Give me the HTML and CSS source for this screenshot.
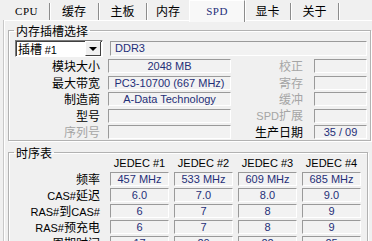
FILE: index.html
```html
<!DOCTYPE html>
<html lang="zh-CN">
<head>
    <meta charset="UTF-8">
    <title>CPU-Z SPD</title>
    <link rel="stylesheet" href="styles.css">
</head>
<body>
    <div class="tabs">
        <div class="tab mono">CPU</div>
        <div class="tab">缓存</div>
        <div class="tab">主板</div>
        <div class="tab">内存</div>
        <div class="tab mono active">SPD</div>
        <div class="tab">显卡</div>
        <div class="tab">关于</div>
    </div>

    <div class="panel">
        <fieldset class="group slot">
            <legend>内存插槽选择</legend>
            <div class="slot-top">
                <div class="combo">
                    <span>插槽 <span class="l">#1</span></span>
                    <span class="arrow"></span>
                </div>
                <div class="field left">DDR3</div>
            </div>
            <div class="info">
                <label>模块大小</label><div class="field">2048 MB</div>
                <label class="off">校正</label><div class="field"></div>

                <label>最大带宽</label><div class="field">PC3-10700 (667 MHz)</div>
                <label class="off">寄存</label><div class="field"></div>

                <label>制造商</label><div class="field">A-Data Technology</div>
                <label class="off">缓冲</label><div class="field"></div>

                <label>型号</label><div class="field"></div>
                <label class="off"><span class="l">SPD</span>扩展</label><div class="field"></div>

                <label class="off">序列号</label><div class="field"></div>
                <label>生产日期</label><div class="field">35 / 09</div>
            </div>
        </fieldset>

        <fieldset class="group timing">
            <legend>时序表</legend>
            <div class="timings">
                <span></span>
                <span class="head">JEDEC #1</span>
                <span class="head">JEDEC #2</span>
                <span class="head">JEDEC #3</span>
                <span class="head">JEDEC #4</span>

                <label>频率</label>
                <div class="field">457 MHz</div>
                <div class="field">533 MHz</div>
                <div class="field">609 MHz</div>
                <div class="field">685 MHz</div>

                <label><span class="l">CAS#</span>延迟</label>
                <div class="field">6.0</div>
                <div class="field">7.0</div>
                <div class="field">8.0</div>
                <div class="field">9.0</div>

                <label><span class="l">RAS#</span>到<span class="l">CAS#</span></label>
                <div class="field">6</div>
                <div class="field">7</div>
                <div class="field">8</div>
                <div class="field">9</div>

                <label><span class="l">RAS#</span>预充电</label>
                <div class="field">6</div>
                <div class="field">7</div>
                <div class="field">8</div>
                <div class="field">9</div>

                <label>周期时间</label>
                <div class="field">17</div>
                <div class="field">20</div>
                <div class="field">22</div>
                <div class="field">25</div>
            </div>
        </fieldset>
    </div>
</body>
</html>
```

FILE: styles.css
```css
body {
    margin: 0;
    height: 241px;
    overflow: hidden;
    background-color: #f0f0f0;
    font-family: "Noto Sans CJK SC", sans-serif;
    font-size: 12px;
    color: #000;
}

.l {
    font-family: "Liberation Sans", sans-serif;
    font-size: 11px;
}

/* tabs */
.tabs {
    display: flex;
    height: 20px;
    padding-left: 4px;
}

.tab {
    height: 17px;
    margin-top: 3px;
    line-height: 16px;
    text-align: center;
    border-right: 1px solid #8c8c8c;
    box-shadow: 1px 0 0 #fff;
}

.tab:nth-child(1) { width: 45px; }
.tab:nth-child(2) { width: 48px; }
.tab:nth-child(3) { width: 47px; }
.tab:nth-child(4) { width: 42px; border-right: none; box-shadow: none; }
.tab:nth-child(6) { width: 45px; }
.tab:nth-child(7) { width: 47px; }

.tab.mono {
    font-family: "Liberation Serif", serif;
    font-size: 11px;
    letter-spacing: 0.5px;
}

.tab.active {
    width: 54px;
    height: 21px;
    margin-top: 0;
    line-height: 21px;
    color: #1f2f78;
    background-color: #f8f8f8;
    border-top: 1px solid #fff;
    border-left: 1px solid #fff;
    border-right: 1px solid #8c8c8c;
    position: relative;
    z-index: 1;
}

/* panel */
.panel {
    margin-left: 4px;
    border-top: 1px solid #fff;
    border-left: 1px solid #fff;
    box-shadow: -1px 0 0 #c8c8c8;
    padding: 0 4px 0 3px;
}

.group {
    margin: 2px 0 0;
    padding: 1px 3px 1px 6px;
    border: 1px solid #b2b2b2;
    box-shadow: 1px 1px 0 #fff, inset 1px 1px 0 #fff;
}

.group legend {
    padding: 0 2px;
    margin-left: -1px;
    line-height: 15px;
}

.field {
    height: 12px;
    line-height: 12px;
    border-top: 1px solid #9a9a9a;
    border-left: 1px solid #9a9a9a;
    border-bottom: 1px solid #fff;
    border-right: 1px solid #fff;
    background-color: #f2f2f2;
    font-family: "Liberation Sans", sans-serif;
    font-size: 11px;
    color: #1f2f78;
    text-align: center;
    white-space: nowrap;
    overflow: hidden;
}

.field.left {
    text-align: left;
    padding-left: 4px;
}

label {
    text-align: right;
    line-height: 14px;
    white-space: nowrap;
}

label.off {
    color: #a5a5a5;
}

/* slot selector */
.slot-top {
    display: flex;
    align-items: center;
    gap: 7px;
    margin-top: 1px;
}

.combo {
    width: 84px;
    height: 15px;
    display: flex;
    justify-content: space-between;
    align-items: center;
    padding-left: 2px;
    background-color: #fff;
    border-top: 1px solid #7a7a7a;
    border-left: 1px solid #7a7a7a;
    border-bottom: 1px solid #fff;
    border-right: 1px solid #fff;
    box-shadow: inset 1px 1px 0 #404040;
}

.arrow {
    width: 14px;
    height: 13px;
    margin-right: 1px;
    background-color: #f0f0f0;
    border-top: 1px solid #fff;
    border-left: 1px solid #fff;
    border-right: 1px solid #404040;
    border-bottom: 1px solid #404040;
    display: flex;
    justify-content: center;
    align-items: center;
}

.arrow::after {
    content: "";
    border-left: 4px solid transparent;
    border-right: 4px solid transparent;
    border-top: 4px solid #000;
    margin-top: 1px;
}

.slot-top .field {
    flex: 1;
    height: 13px;
    line-height: 13px;
}

.info {
    display: grid;
    grid-template-columns: 85px 123px 67px 53px;
    grid-auto-rows: 14px;
    column-gap: 8px;
    row-gap: 2.5px;
    margin-top: 2px;
    align-items: center;
}

.info label:nth-child(4n+3) {
    padding-right: 3px;
}

/* timings */
.timing {
    margin-top: 4px;
}

.timings {
    display: grid;
    grid-template-columns: 90px repeat(4, 59px);
    grid-auto-rows: 14px;
    column-gap: 5px;
    row-gap: 2px;
    margin-top: -5px;
    align-items: center;
}

.timings label {
    padding-right: 5px;
}

.head {
    font-family: "Liberation Sans", sans-serif;
    font-size: 11px;
    text-align: center;
    line-height: 14px;
}
```
